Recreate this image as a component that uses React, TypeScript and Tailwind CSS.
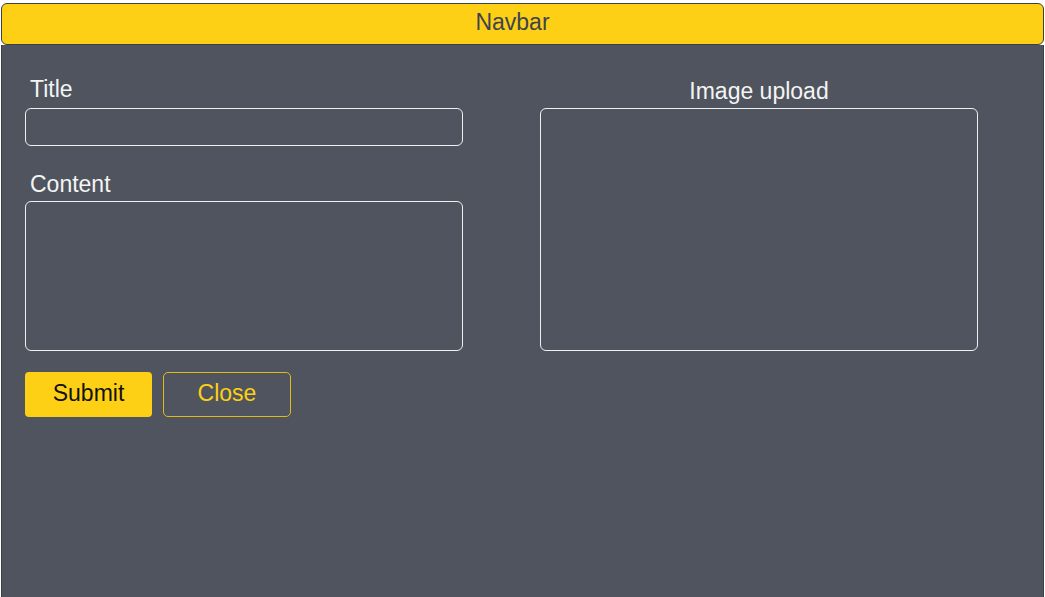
export default function App() {
  return (
    <div
      className="flex h-[597px] w-[1045px] flex-col bg-white px-[1px] pt-[3px]"
      style={{ fontFamily: '"Liberation Sans", Arial, sans-serif' }}
    >
      {/* Navbar */}
      <header className="flex h-[42px] shrink-0 items-center justify-center rounded-[6px] border border-[#3b3f48] bg-[#fdd015] pb-[4px] pr-[20px] text-[23px] leading-[28px] text-[#3f4450]">
        Navbar
      </header>

      {/* Form panel */}
      <main className="flex flex-1 gap-[77px] border-x border-[#3b3f48] bg-[#4f545e] pl-[23px] pt-[30px]">
        <section className="flex w-[438px] flex-col">
          <label className="mb-[5px] pl-[5px] text-[23px] leading-[28px] text-[#f4f4f4]">Title</label>
          <input
            type="text"
            className="h-[38px] w-full rounded-[6px] border border-[#f0f0f0] bg-transparent px-2 text-white outline-none"
          />

          <label className="mb-[3px] mt-[24px] pl-[5px] text-[23px] leading-[28px] text-[#f4f4f4]">Content</label>
          <textarea className="h-[150px] w-full resize-none rounded-[6px] border border-[#f0f0f0] bg-transparent p-2 text-white outline-none" />

          <div className="mt-[21px] flex gap-[11px]">
            <button
              type="button"
              className="h-[45px] w-[127px] rounded-[4px] bg-[#fdd015] pb-[4px] text-[23px] leading-[28px] text-[#111111]"
            >
              Submit
            </button>
            <button
              type="button"
              className="h-[45px] w-[128px] rounded-[5px] border border-[#e0bb18] bg-transparent pb-[4px] text-[23px] leading-[28px] text-[#fdd015]"
            >
              Close
            </button>
          </div>
        </section>

        <section className="flex w-[438px] flex-col">
          <label className="mb-[3px] mt-[2px] text-center text-[23px] leading-[28px] text-[#f4f4f4]">Image upload</label>
          <div className="h-[243px] w-full rounded-[6px] border border-[#f0f0f0]" />
        </section>
      </main>
    </div>
  );
}
